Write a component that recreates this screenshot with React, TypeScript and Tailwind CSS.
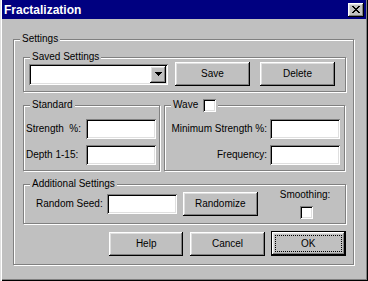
import type { ReactNode } from 'react';

// classic 3d bevels
const raised =
  'shadow-[inset_-1px_-1px_#000,inset_1px_1px_#fff,inset_-2px_-2px_#808080,inset_2px_2px_#dfdfdf]';
const sunken =
  'shadow-[inset_1px_1px_#808080,inset_-1px_-1px_#fff,inset_2px_2px_#000,inset_-2px_-2px_#dfdfdf]';

function GroupBox({ label, className, children }: { label: ReactNode; className: string; children?: ReactNode }) {
  return (
    <div className={`relative border border-[#808080] shadow-[inset_1px_1px_#fff,1px_1px_#fff] ${className}`}>
      {/* legend sits on top of the etched line */}
      <span className="absolute top-[-7px] left-[6px] px-[2px] bg-[#c0c0c0] leading-[12px] flex items-center whitespace-pre">
        {label}
      </span>
      {children}
    </div>
  );
}

function Field({ className = '' }: { className?: string }) {
  return <div className={`w-[70px] h-[20px] bg-white ${sunken} ${className}`} />;
}

function Checkbox({ className = '' }: { className?: string }) {
  return <div className={`w-[13px] h-[13px] bg-white ${sunken} ${className}`} />;
}

function Button({ children, className = '' }: { children: ReactNode; className?: string }) {
  return (
    <div className={`w-[75px] h-[24px] flex items-center justify-center ${raised} ${className}`}>{children}</div>
  );
}

function TitleBar() {
  return (
    <div className="h-[19px] bg-[#000080] flex items-center justify-between pl-[2px] pr-[2px]">
      <span className="text-white font-bold text-[12px] leading-[14px] pt-[1px]">Fractalization</span>
      <div className={`w-[16px] h-[14px] bg-[#c0c0c0] flex items-center justify-center ${raised}`}>
        {/* close glyph */}
        <svg width="8" height="7" viewBox="0 0 8 7" shapeRendering="crispEdges">
          <path
            d="M0 0h2v1h-2zM6 0h2v1h-2zM1 1h2v1h-2zM5 1h2v1h-2zM2 2h4v1h-4zM3 3h2v1h-2zM2 4h4v1h-4zM1 5h2v1h-2zM5 5h2v1h-2zM0 6h2v1h-2zM6 6h2v1h-2z"
            fill="#000"
          />
        </svg>
      </div>
    </div>
  );
}

export default function App() {
  return (
    <div className="w-[368px] h-[281px] bg-[#c0c0c0] font-['Liberation_Sans',Arial,sans-serif] text-[10px] leading-[12px] text-black px-[2px] pb-[2px] flex flex-col shadow-[inset_1px_0_#dfdfdf,inset_2px_0_#fff,inset_-1px_-1px_#000,inset_-2px_-2px_#808080]">
      <TitleBar />

      <div className="pl-[11px] pt-[20px]">
        <GroupBox label="Settings" className="w-[341px] h-[226px] pt-[17px] pl-[9px] pr-[7px] pb-[8px] flex flex-col">
          {/* Saved settings */}
          <GroupBox label="Saved Settings" className="w-[323px] h-[35px] pl-[5px] flex items-center">
            <div className={`w-[139px] h-[21px] bg-white flex justify-end items-center pr-[2px] ${sunken}`}>
              <div className={`w-[16px] h-[17px] bg-[#c0c0c0] flex items-center justify-center ${raised}`}>
                <svg width="7" height="4" viewBox="0 0 7 4" shapeRendering="crispEdges">
                  <path d="M0 0h7v1h-7zM1 1h5v1h-5zM2 2h3v1h-3zM3 3h1v1h-1z" fill="#000" />
                </svg>
              </div>
            </div>
            <Button className="ml-[7px]">Save</Button>
            <Button className="ml-[10px]">Delete</Button>
          </GroupBox>

          <div className="mt-[13px] flex gap-[4px]">
            {/* Standard */}
            <GroupBox label="Standard" className="w-[137px] h-[66px] pt-[13px] pl-[2px] pr-[3px] flex flex-col gap-[6px]">
              <div className="flex items-center justify-between">
                <span className="whitespace-pre">Strength  %:</span>
                <Field />
              </div>
              <div className="flex items-center justify-between">
                <span>Depth 1-15:</span>
                <Field />
              </div>
            </GroupBox>

            {/* Wave */}
            <GroupBox
              label={
                <>
                  Wave
                  <Checkbox className="ml-[5px]" />
                </>
              }
              className="w-[181px] h-[66px] pt-[13px] pr-[4px] flex flex-col items-end gap-[6px]"
            >
              <div className="flex items-center gap-[3px]">
                <span>Minimum Strength %:</span>
                <Field />
              </div>
              <div className="flex items-center gap-[3px]">
                <span>Frequency:</span>
                <Field />
              </div>
            </GroupBox>
          </div>

          {/* Additional */}
          <GroupBox label="Additional Settings" className="mt-[13px] w-[323px] h-[41px] pl-[12px] flex items-center">
            <span>Random Seed:</span>
            <Field className="ml-[4px]" />
            <Button className="ml-[6px]">Randomize</Button>
            <div className="ml-[22px] flex flex-col items-center gap-[6px] pt-[1px]">
              <span>Smoothing:</span>
              <Checkbox className="ml-[3px] -mt-[1px]" />
            </div>
          </GroupBox>

          {/* dialog buttons */}
          <div className="mt-[7px] pl-[86px] flex items-center">
            <Button>Help</Button>
            <Button className="ml-[7px]">Cancel</Button>
            <div className={`ml-[6px] w-[76px] h-[25px] border border-black flex ${raised}`}>
              <div className="m-[3px] flex-1 border border-dotted border-black flex items-center justify-center">OK</div>
            </div>
          </div>
        </GroupBox>
      </div>
    </div>
  );
}
